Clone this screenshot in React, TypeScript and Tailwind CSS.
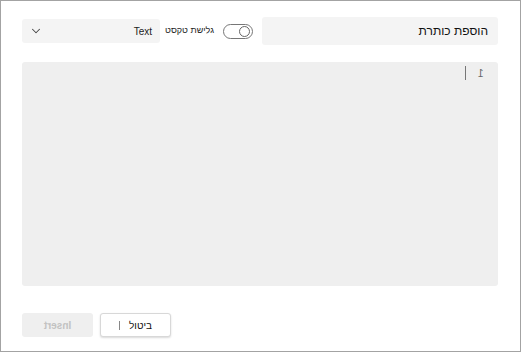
import { ChevronDown } from "lucide-react";

export default function App() {
  return (
    <div className="h-[353px] w-[522px] bg-white" style={{ fontFamily: '"Liberation Sans", "DejaVu Sans", sans-serif' }}>
      <div className="flex h-[352px] w-[521px] flex-col border border-[#a3a3a3] bg-white pl-[21px] pr-[22px] pt-[16px]">
        <div className="flex h-[28px] items-center">
          <button className="flex h-[24px] w-[138px] shrink-0 items-center justify-between rounded-[3px] bg-[#f4f4f4] pl-[7px] pr-[8px]">
            <ChevronDown size={14} strokeWidth={1.75} className="text-[#444]" />
            <span className="text-[10px] text-[#222]">Text</span>
          </button>
          <div className="ml-auto flex items-center gap-[9px]">
            <span dir="rtl" className="whitespace-nowrap text-[9px] text-[#222]">גלישת טקסט</span>
            <div className="flex h-[15px] w-[30px] items-center justify-end rounded-full border border-[#777] pr-[2px]">
              <div className="h-[11px] w-[11px] rounded-full border border-[#666] bg-white" />
            </div>
          </div>
          <div className="ml-[9px] flex h-[28px] w-[236px] shrink-0 items-center justify-end rounded-[3px] bg-[#f4f4f4] pr-[10px]">
            <span dir="rtl" className="text-[12px] text-[#111]">הוספת כותרת</span>
          </div>
        </div>
        <div className="mt-[17px] flex h-[224px] w-full justify-end rounded-[3px] bg-[#efefef] pr-[14px] pt-[4px]">
          <div className="mr-[12px] h-[14px] w-px bg-[#777]" />
          <span className="mt-[3px] -scale-x-100 text-[10px] leading-none text-[#666]">1</span>
        </div>
        <div className="mt-[27px] flex gap-[7px]">
          <button className="flex h-[24px] w-[71px] items-center justify-center rounded-[3px] bg-[#efefef] text-[10px] font-bold text-[#c2c2c2]">
            <span className="-scale-x-100">Insert</span>
          </button>
          <button className="flex h-[24px] w-[71px] items-center justify-center gap-[9px] rounded-[3px] border border-[#d8d8d8] bg-white text-[10px] text-[#111] shadow-[0_1px_2px_rgba(0,0,0,0.15)]">
            <span className="h-[9px] w-px bg-[#888]" />
            <span dir="rtl">ביטול</span>
          </button>
        </div>
      </div>
    </div>
  );
}
